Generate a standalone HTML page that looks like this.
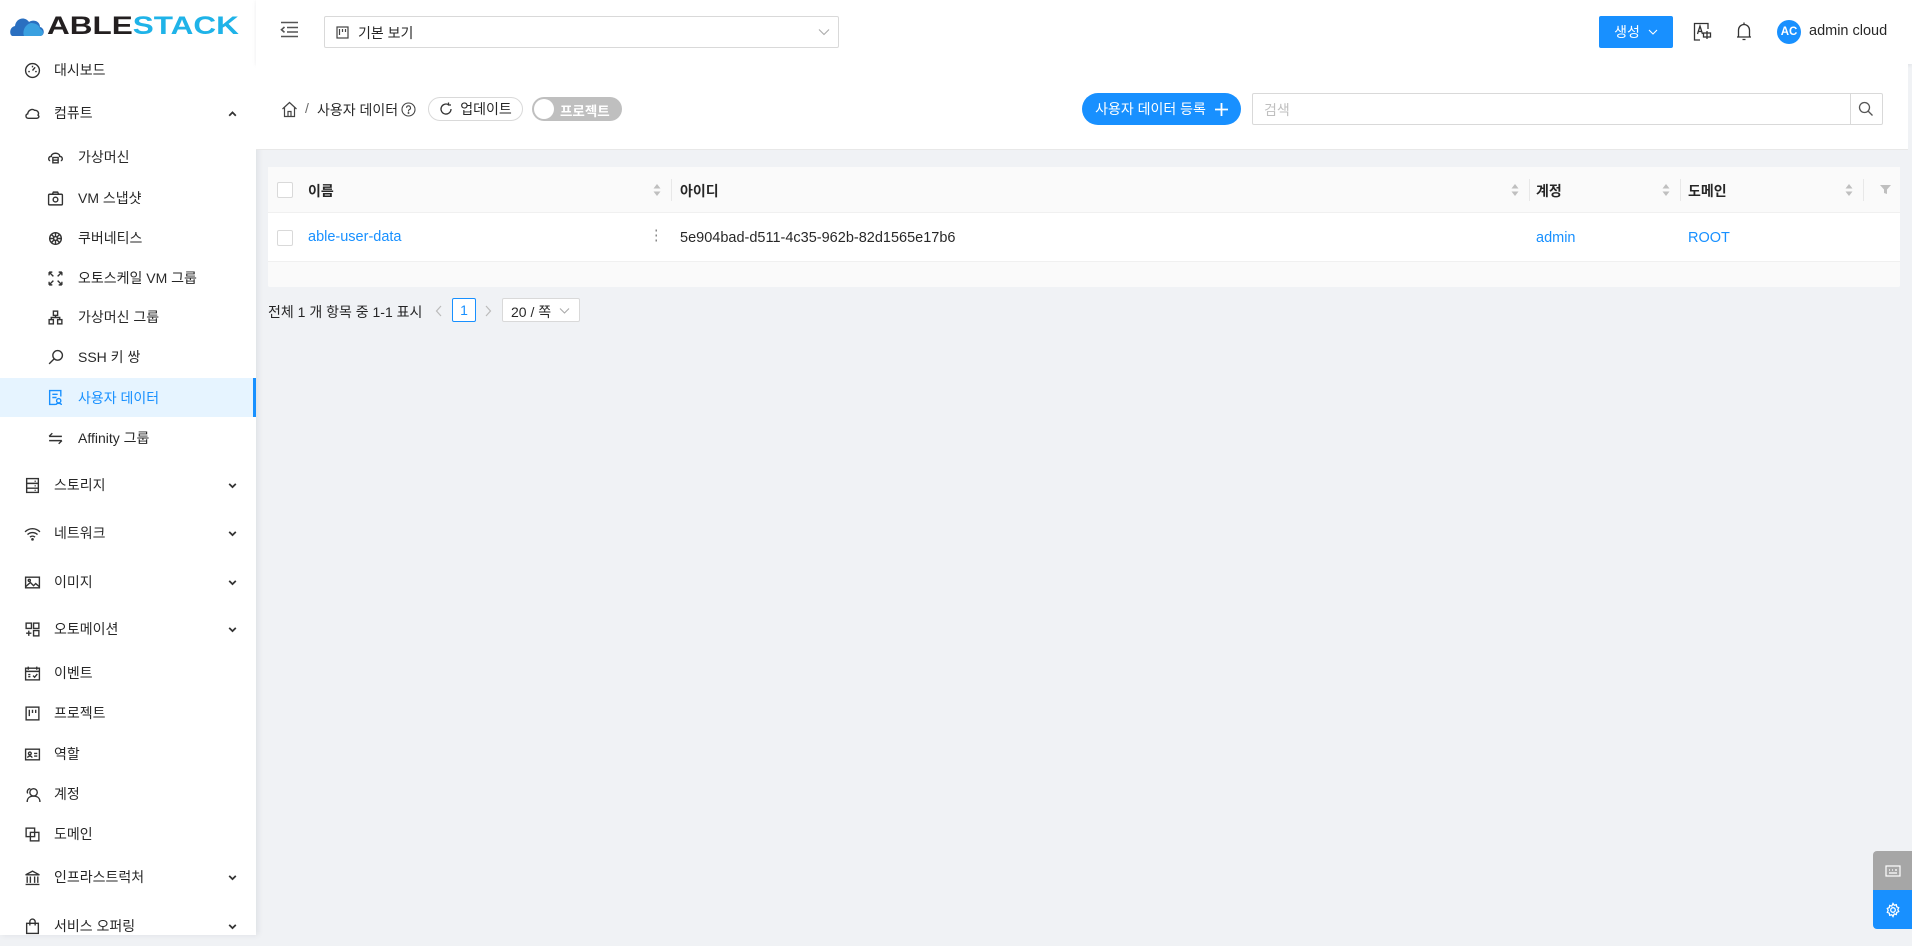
<!DOCTYPE html>
<html><head><meta charset="utf-8"><style>
*{box-sizing:border-box;margin:0;padding:0}
body{width:1912px;height:935px;overflow:hidden;background:#f0f2f5;font-family:"Liberation Sans","Noto Sans CJK KR",sans-serif;font-size:14px;color:rgba(0,0,0,.85);position:relative}
.a{position:absolute}
#side{left:0;top:0;width:256px;height:935px;background:#fff;box-shadow:2px 0 6px rgba(0,21,41,.08)}
.mi{position:absolute;left:0;width:256px;height:40px;display:flex;align-items:center;font-size:14px;color:rgba(0,0,0,.85)}
.mi svg{position:absolute;width:17px;height:17px;fill:none;stroke:#333;stroke-width:1.3}
.top svg{left:24px}.top span{position:absolute;left:54px}
.sub svg{left:47px}.sub span{position:absolute;left:78px}
.mi svg.chev{left:227px;width:11px;height:11px;stroke-width:1.6}
.sel{background:#e6f4ff;color:#1890ff;border-right:3px solid #1890ff}
.sel svg{stroke:#1890ff}
#hdr{left:256px;top:0;width:1656px;height:64px;background:#fff;box-shadow:0 1px 4px rgba(0,21,41,.08)}
.btn{position:absolute;display:flex;align-items:center;justify-content:center}
</style></head><body>
<div id="side" class="a">
 <svg class="a" style="left:10px;top:14px" width="36" height="24" viewBox="0 0 36 24"><path d="M3 22 C-1 22 -1 13 5 12 C6 4 15 2 19 8 C23 5 30 7 30 13 C35 14 35 22 30 22Z" fill="#2a6fc0"/><path d="M14 22 C12 16 16 10 21 9 C25 9 30 11 30 15 C34 16 34 22 30 22Z" fill="#3aa0e0"/></svg>
 <div class="a" style="left:47px;top:12px;font-size:25px;font-weight:bold;line-height:28px;transform:scaleX(1.26);transform-origin:left;white-space:nowrap"><span style="color:#231f20">ABLE</span><span style="color:#1fb3e8">STACK</span></div>
 <div class="mi top" style="top:50px"><svg viewBox="0 0 16 16"><circle cx="8" cy="8" r="6.5"/><path d="M8 8 L10.5 5 M4 9h1.5M10.5 9H12M8 3.5V5"/></svg><span>대시보드</span></div>
 <div class="mi top" style="top:93px"><svg viewBox="0 0 16 16"><path d="M4 12.5C1.5 12.5 1 9 3.5 8.3 3.8 5 7.5 3 10 5 12.8 4.7 14.5 7.5 13.2 9.5 15 11 13.5 12.5 12 12.5Z"/></svg><span>컴퓨트</span><svg class="chev" viewBox="0 0 10 10"><path d="M2 7 5 4 8 7"/></svg></div>
 <div class="mi sub" style="top:137px"><svg viewBox="0 0 16 16"><path d="M3 11C1 11 1 7 4 7 4 3 12 3 12 7 15 7 15 11 13 11"/><rect x="5.5" y="8" width="5" height="5"/><path d="M5.5 10.5h5"/></svg><span>가상머신</span></div>
 <div class="mi sub" style="top:178px"><svg viewBox="0 0 16 16"><rect x="1.5" y="4" width="13" height="10" rx="1"/><path d="M5 4 6 2h4l1 2"/><circle cx="8" cy="9" r="2.2"/></svg><span>VM 스냅샷</span></div>
 <div class="mi sub" style="top:218px"><svg viewBox="0 0 16 16"><circle cx="8" cy="8" r="5.5"/><circle cx="8" cy="8" r="1.8"/><path d="M8 2.5v3.7M8 9.8v3.7M2.5 8h3.7M9.8 8h3.7M4.1 4.1l2.6 2.6M9.3 9.3l2.6 2.6M11.9 4.1 9.3 6.7M6.7 9.3 4.1 11.9"/></svg><span>쿠버네티스</span></div>
 <div class="mi sub" style="top:258px"><svg viewBox="0 0 16 16"><path d="M2 2l4 4M2 2h3M2 2v3M14 2l-4 4M14 2h-3M14 2v3M2 14l4-4M2 14h3M2 14v-3M14 14l-4-4M14 14h-3M14 14v-3"/></svg><span>오토스케일 VM 그룹</span></div>
 <div class="mi sub" style="top:297px"><svg viewBox="0 0 16 16"><rect x="6" y="2" width="4" height="4"/><rect x="2" y="10" width="4" height="4"/><rect x="10" y="10" width="4" height="4"/><path d="M8 6v2M4 10V8h8v2"/></svg><span>가상머신 그룹</span></div>
 <div class="mi sub" style="top:337px"><svg viewBox="0 0 16 16"><circle cx="10" cy="6" r="4.5"/><path d="M6.8 9.2 2 14"/></svg><span>SSH 키 쌍</span></div>
 <div class="mi sub sel" style="top:378px;height:39px"><svg viewBox="0 0 16 16"><path d="M13 7V1.5H2.5v13H8M5 5h5M5 8h4"/><circle cx="11" cy="11" r="2"/><path d="M8.5 15c0-2 5-2 5 0"/></svg><span>사용자 데이터</span></div>
 <div class="mi sub" style="top:418px"><svg viewBox="0 0 16 16"><path d="M2 6h12M2 6l3-3M14 10H2M14 10l-3 3"/></svg><span>Affinity 그룹</span></div>
 <div class="mi top" style="top:465px"><svg viewBox="0 0 16 16"><rect x="2.5" y="1.5" width="11" height="13"/><path d="M2.5 6h11M2.5 10.5h11M10 4h1M10 8.3h1M10 12.5h1"/></svg><span>스토리지</span><svg class="chev" viewBox="0 0 10 10"><path d="M2 3.5 5 6.5 8 3.5"/></svg></div>
 <div class="mi top" style="top:513px"><svg viewBox="0 0 16 16"><path d="M1 6.5c4-4 10-4 14 0M3.3 9c2.7-2.5 6.7-2.5 9.4 0M5.6 11.4c1.4-1.2 3.4-1.2 4.8 0"/><circle cx="8" cy="13.5" r=".6"/></svg><span>네트워크</span><svg class="chev" viewBox="0 0 10 10"><path d="M2 3.5 5 6.5 8 3.5"/></svg></div>
 <div class="mi top" style="top:562px"><svg viewBox="0 0 16 16"><rect x="1.5" y="3" width="13" height="10"/><circle cx="5" cy="6" r="1"/><path d="M1.5 12 6 8l3 3 2-2 3.5 3"/></svg><span>이미지</span><svg class="chev" viewBox="0 0 10 10"><path d="M2 3.5 5 6.5 8 3.5"/></svg></div>
 <div class="mi top" style="top:609px"><svg viewBox="0 0 16 16"><rect x="2" y="2" width="5" height="5"/><rect x="9" y="2" width="5" height="5"/><rect x="9" y="9" width="5" height="5"/><path d="M4.5 9v5M2 11.5h5"/></svg><span>오토메이션</span><svg class="chev" viewBox="0 0 10 10"><path d="M2 3.5 5 6.5 8 3.5"/></svg></div>
 <div class="mi top" style="top:653px"><svg viewBox="0 0 16 16"><rect x="1.5" y="3" width="13" height="11"/><path d="M4 1.5v3M12 1.5v3M1.5 6h13M4 9h2M4 11h2M8.5 10l1.5 1.5 2.5-3"/></svg><span>이벤트</span></div>
 <div class="mi top" style="top:693px"><svg viewBox="0 0 16 16"><rect x="2" y="2" width="12" height="12"/><path d="M5 4.5v6M8 4.5v3M11 4.5v3"/></svg><span>프로젝트</span></div>
 <div class="mi top" style="top:734px"><svg viewBox="0 0 16 16"><rect x="1.5" y="3" width="13" height="10"/><circle cx="5.5" cy="7" r="1.3"/><path d="M3.5 11c0-2 4-2 4 0M9.5 7h3M9.5 9.5h3"/></svg><span>역할</span></div>
 <div class="mi top" style="top:774px"><svg viewBox="0 0 16 16"><circle cx="9" cy="6" r="3.5"/><path d="M3 15c0-4 3-5.5 6-5.5s6 1.5 6 5.5M6 2.5C3.5 2.5 2.5 5 3.5 7"/></svg><span>계정</span></div>
 <div class="mi top" style="top:814px"><svg viewBox="0 0 16 16"><rect x="2" y="2" width="8" height="8"/><rect x="6" y="6" width="8" height="8"/></svg><span>도메인</span></div>
 <div class="mi top" style="top:857px"><svg viewBox="0 0 16 16"><path d="M1.5 5.5 8 2l6.5 3.5zM3 7v6M6 7v6M10 7v6M13 7v6M1.5 14.5h13"/></svg><span>인프라스트럭처</span><svg class="chev" viewBox="0 0 10 10"><path d="M2 3.5 5 6.5 8 3.5"/></svg></div>
 <div class="mi top" style="top:906px"><svg viewBox="0 0 16 16"><rect x="2.5" y="5" width="11" height="9.5"/><path d="M5.5 7V3.5a2.5 2.5 0 0 1 5 0V7"/></svg><span>서비스 오퍼링</span><svg class="chev" viewBox="0 0 10 10"><path d="M2 3.5 5 6.5 8 3.5"/></svg></div>
</div>

<div id="hdr" class="a">
 <svg class="a" style="left:24px;top:21px" width="19" height="17" viewBox="0 0 19 17" fill="none" stroke="#555" stroke-width="1.6"><path d="M1 1.5h17M7 6.5h11M7 11h11M1 15.5h17M4.5 6 1.5 8.7 4.5 11.4"/></svg>
 <div class="a" style="left:68px;top:16px;width:515px;height:32px;border:1px solid #d9d9d9;border-radius:2px">
  <svg class="a" style="left:11px;top:9px" width="13" height="13" viewBox="0 0 13 13" fill="none" stroke="#444" stroke-width="1.2"><rect x="1" y="1" width="11" height="11"/><path d="M3.5 3v6M6.5 3v3M9.5 3v3"/></svg>
  <span class="a" style="left:33px;top:6px;font-size:14px">기본 보기</span>
  <svg class="a" style="left:493px;top:10px" width="12" height="10" viewBox="0 0 12 10" fill="none" stroke="#aaa" stroke-width="1.1"><path d="M1 2.5 6 7.5 11 2.5"/></svg>
 </div>
 <div class="btn" style="left:1343px;top:16px;width:74px;height:32px;background:#1890ff;border-radius:2px;color:#fff;font-size:14px">생성<svg style="margin-left:8px" width="10" height="8" viewBox="0 0 10 8" fill="none" stroke="#fff" stroke-width="1.1"><path d="M1 2 5 6 9 2"/></svg></div>
 <svg class="a" style="left:1437px;top:22px" width="20" height="20" viewBox="0 0 20 20" fill="none" stroke="#333" stroke-width="1.3"><path d="M15 7V1.5H1.5V18H7"/><path d="M4.5 12 7 4l2.5 8M5.3 9.5h3.4"/><rect x="10.5" y="11" width="7" height="4"/><path d="M14 9v8"/></svg>
 <svg class="a" style="left:1479px;top:21px" width="18" height="21" viewBox="0 0 18 21" fill="none" stroke="#333" stroke-width="1.3"><path d="M9 1.5v1.5M3.5 16V9a5.5 5.5 0 0 1 11 0v7zM2 16h14M7.5 18.5h3"/></svg>
 <div class="btn" style="left:1521px;top:20px;width:24px;height:24px;border-radius:50%;background:#1890ff;color:#fff;font-size:11.5px;font-weight:bold">AC</div>
 <span class="a" style="left:1553px;top:23px;font-size:14.5px">admin cloud</span>
</div>

<div class="a" style="left:256px;top:64px;width:1652px;height:86px;background:#fff;border-bottom:1px solid #e8e8e8">
 <svg class="a" style="left:25px;top:37px" width="17" height="17" viewBox="0 0 17 17" fill="none" stroke="#444" stroke-width="1.2"><path d="M1.5 8 8.5 1.5 15.5 8M3.5 6.5V15.5h10V6.5M7 15.5v-5h3v5"/></svg>
 <span class="a" style="left:49px;top:36px;color:rgba(0,0,0,.6)">/</span>
 <span class="a" style="left:61px;top:36px;font-size:14px">사용자 데이터</span>
 <svg class="a" style="left:145px;top:38px" width="15" height="15" viewBox="0 0 15 15" fill="none" stroke="#444" stroke-width="1.1"><circle cx="7.5" cy="7.5" r="6.5"/><path d="M5.5 5.8a2 2 0 1 1 2.7 1.9c-.5.2-.7.6-.7 1.2v.6"/><circle cx="7.5" cy="11" r=".4"/></svg>
 <div class="btn" style="left:172px;top:33px;width:95px;height:24px;border:1px solid #d9d9d9;border-radius:12px;font-size:14px"><svg style="margin-right:7px" width="14" height="14" viewBox="0 0 14 14" fill="none" stroke="#333" stroke-width="1.3"><path d="M12 7A5 5 0 1 1 9.5 2.7M9.5 0.5v2.5H12"/></svg>업데이트</div>
 <div class="a" style="left:276px;top:33px;width:90px;height:24px;border-radius:12px;background:#bfbfbf"><div class="a" style="left:2px;top:2px;width:20px;height:20px;border-radius:50%;background:#fff"></div><span class="a" style="left:28px;top:3px;color:#fff;font-size:13.5px;font-weight:bold">프로젝트</span></div>
 <div class="btn" style="left:826px;top:29px;width:159px;height:32px;border-radius:16px;background:#1890ff;color:#fff;font-size:14px">사용자 데이터 등록<svg style="margin-left:9px" width="13" height="13" viewBox="0 0 13 13" stroke="#fff" stroke-width="1.8"><path d="M6.5 0v13M0 6.5h13"/></svg></div>
 <div class="a" style="left:996px;top:29px;width:631px;height:32px;border:1px solid #d9d9d9;border-radius:2px">
  <span class="a" style="left:11px;top:6px;color:#bfbfbf">검색</span>
  <div class="a" style="right:0;top:-1px;width:32px;height:32px;border-left:1px solid #d9d9d9"></div>
  <svg class="a" style="right:8px;top:7px" width="16" height="16" viewBox="0 0 16 16" fill="none" stroke="#555" stroke-width="1.3"><circle cx="6.5" cy="6.5" r="5"/><path d="M10 10l4.5 4.5"/></svg>
 </div>
</div>

<div class="a" style="left:268px;top:167px;width:1632px;height:120px;background:#fafafa;border-radius:2px"></div>
<div class="a" style="left:268px;top:167px;width:1632px;height:46px;background:#fafafa;border-bottom:1px solid #f0f0f0;font-weight:bold;font-size:14px">
 <div class="a" style="left:9px;top:15px;width:16px;height:16px;border:1px solid #d9d9d9;border-radius:2px;background:#fff"></div>
 <span class="a" style="left:40px;top:14px">이름</span>
 <span class="a" style="left:412px;top:14px">아이디</span>
 <span class="a" style="left:1268px;top:14px">계정</span>
 <span class="a" style="left:1420px;top:14px">도메인</span>
 <div class="a" style="left:403px;top:12px;width:1px;height:22px;background:#e8e8e8"></div>
 <div class="a" style="left:1261px;top:12px;width:1px;height:22px;background:#e8e8e8"></div>
 <div class="a" style="left:1412px;top:12px;width:1px;height:22px;background:#e8e8e8"></div>
 <div class="a" style="left:1595px;top:12px;width:1px;height:22px;background:#e8e8e8"></div>
 <svg class="a" style="left:385px;top:16px" width="8" height="14" viewBox="0 0 8 14" fill="#bfbfbf"><path d="M4 1 7.5 5.5h-7zM4 13 .5 8.5h7z"/></svg>
 <svg class="a" style="left:1243px;top:16px" width="8" height="14" viewBox="0 0 8 14" fill="#bfbfbf"><path d="M4 1 7.5 5.5h-7zM4 13 .5 8.5h7z"/></svg>
 <svg class="a" style="left:1394px;top:16px" width="8" height="14" viewBox="0 0 8 14" fill="#bfbfbf"><path d="M4 1 7.5 5.5h-7zM4 13 .5 8.5h7z"/></svg>
 <svg class="a" style="left:1577px;top:16px" width="8" height="14" viewBox="0 0 8 14" fill="#bfbfbf"><path d="M4 1 7.5 5.5h-7zM4 13 .5 8.5h7z"/></svg>
 <svg class="a" style="left:1612px;top:17px" width="11" height="11" viewBox="0 0 11 11" fill="#bfbfbf"><path d="M0 1h11L7 5.5V10L4 9V5.5z"/></svg>
</div>
<div class="a" style="left:268px;top:213px;width:1632px;height:49px;background:#fff;border-bottom:1px solid #f0f0f0;font-size:14.5px">
 <div class="a" style="left:9px;top:17px;width:16px;height:16px;border:1px solid #d9d9d9;border-radius:2px"></div>
 <span class="a" style="left:40px;top:16px;color:#1890ff">able-user-data</span>
 <span class="a" style="left:381px;top:15px;color:#888">⋮</span>
 <span class="a" style="left:412px;top:17px">5e904bad-d511-4c35-962b-82d1565e17b6</span>
 <span class="a" style="left:1268px;top:17px;color:#1890ff">admin</span>
 <span class="a" style="left:1420px;top:17px;color:#1890ff">ROOT</span>
</div>

<span class="a" style="left:268px;top:302px;font-size:14px">전체 1 개 항목 중 1-1 표시</span>
<svg class="a" style="left:435px;top:305px" width="8" height="12" viewBox="0 0 8 12" fill="none" stroke="#bbb" stroke-width="1.2"><path d="M6 1 1.5 6 6 11"/></svg>
<div class="btn" style="left:452px;top:298px;width:24px;height:24px;border:1px solid #1890ff;border-radius:2px;color:#1890ff;background:#fff;font-size:14px">1</div>
<svg class="a" style="left:484px;top:305px" width="8" height="12" viewBox="0 0 8 12" fill="none" stroke="#bbb" stroke-width="1.2"><path d="M2 1 6.5 6 2 11"/></svg>
<div class="a" style="left:502px;top:298px;width:78px;height:24px;border:1px solid #d9d9d9;border-radius:2px;background:#fff"><span class="a" style="left:8px;top:3px;font-size:14px">20 / 쪽</span><svg class="a" style="left:56px;top:8px" width="11" height="8" viewBox="0 0 11 8" fill="none" stroke="#aaa" stroke-width="1.1"><path d="M1 1.5 5.5 6 10 1.5"/></svg></div>

<div class="btn" style="left:1873px;top:851px;width:39px;height:39px;background:#a6a6a6;border-radius:4px 0 0 0"><svg width="16" height="12" viewBox="0 0 16 12" fill="none" stroke="#fff" stroke-width="1.2"><rect x="1" y="1" width="14" height="10"/><path d="M4 5h1M7 5h1M10 5h2M4 8h8"/></svg></div>
<div class="btn" style="left:1873px;top:890px;width:39px;height:39px;background:#1890ff;border-radius:0 0 0 4px"><svg width="16" height="16" viewBox="0 0 16 16" fill="none" stroke="#fff" stroke-width="1.3"><circle cx="8" cy="8" r="2.3"/><path d="M8 1.5l1.2 1.8 2.1-.6.4 2.1 2 .9-.9 1.9.9 1.9-2 .9-.4 2.1-2.1-.6L8 14.5l-1.2-1.8-2.1.6-.4-2.1-2-.9.9-1.9-.9-1.9 2-.9.4-2.1 2.1.6z"/></svg></div>
</body></html>
